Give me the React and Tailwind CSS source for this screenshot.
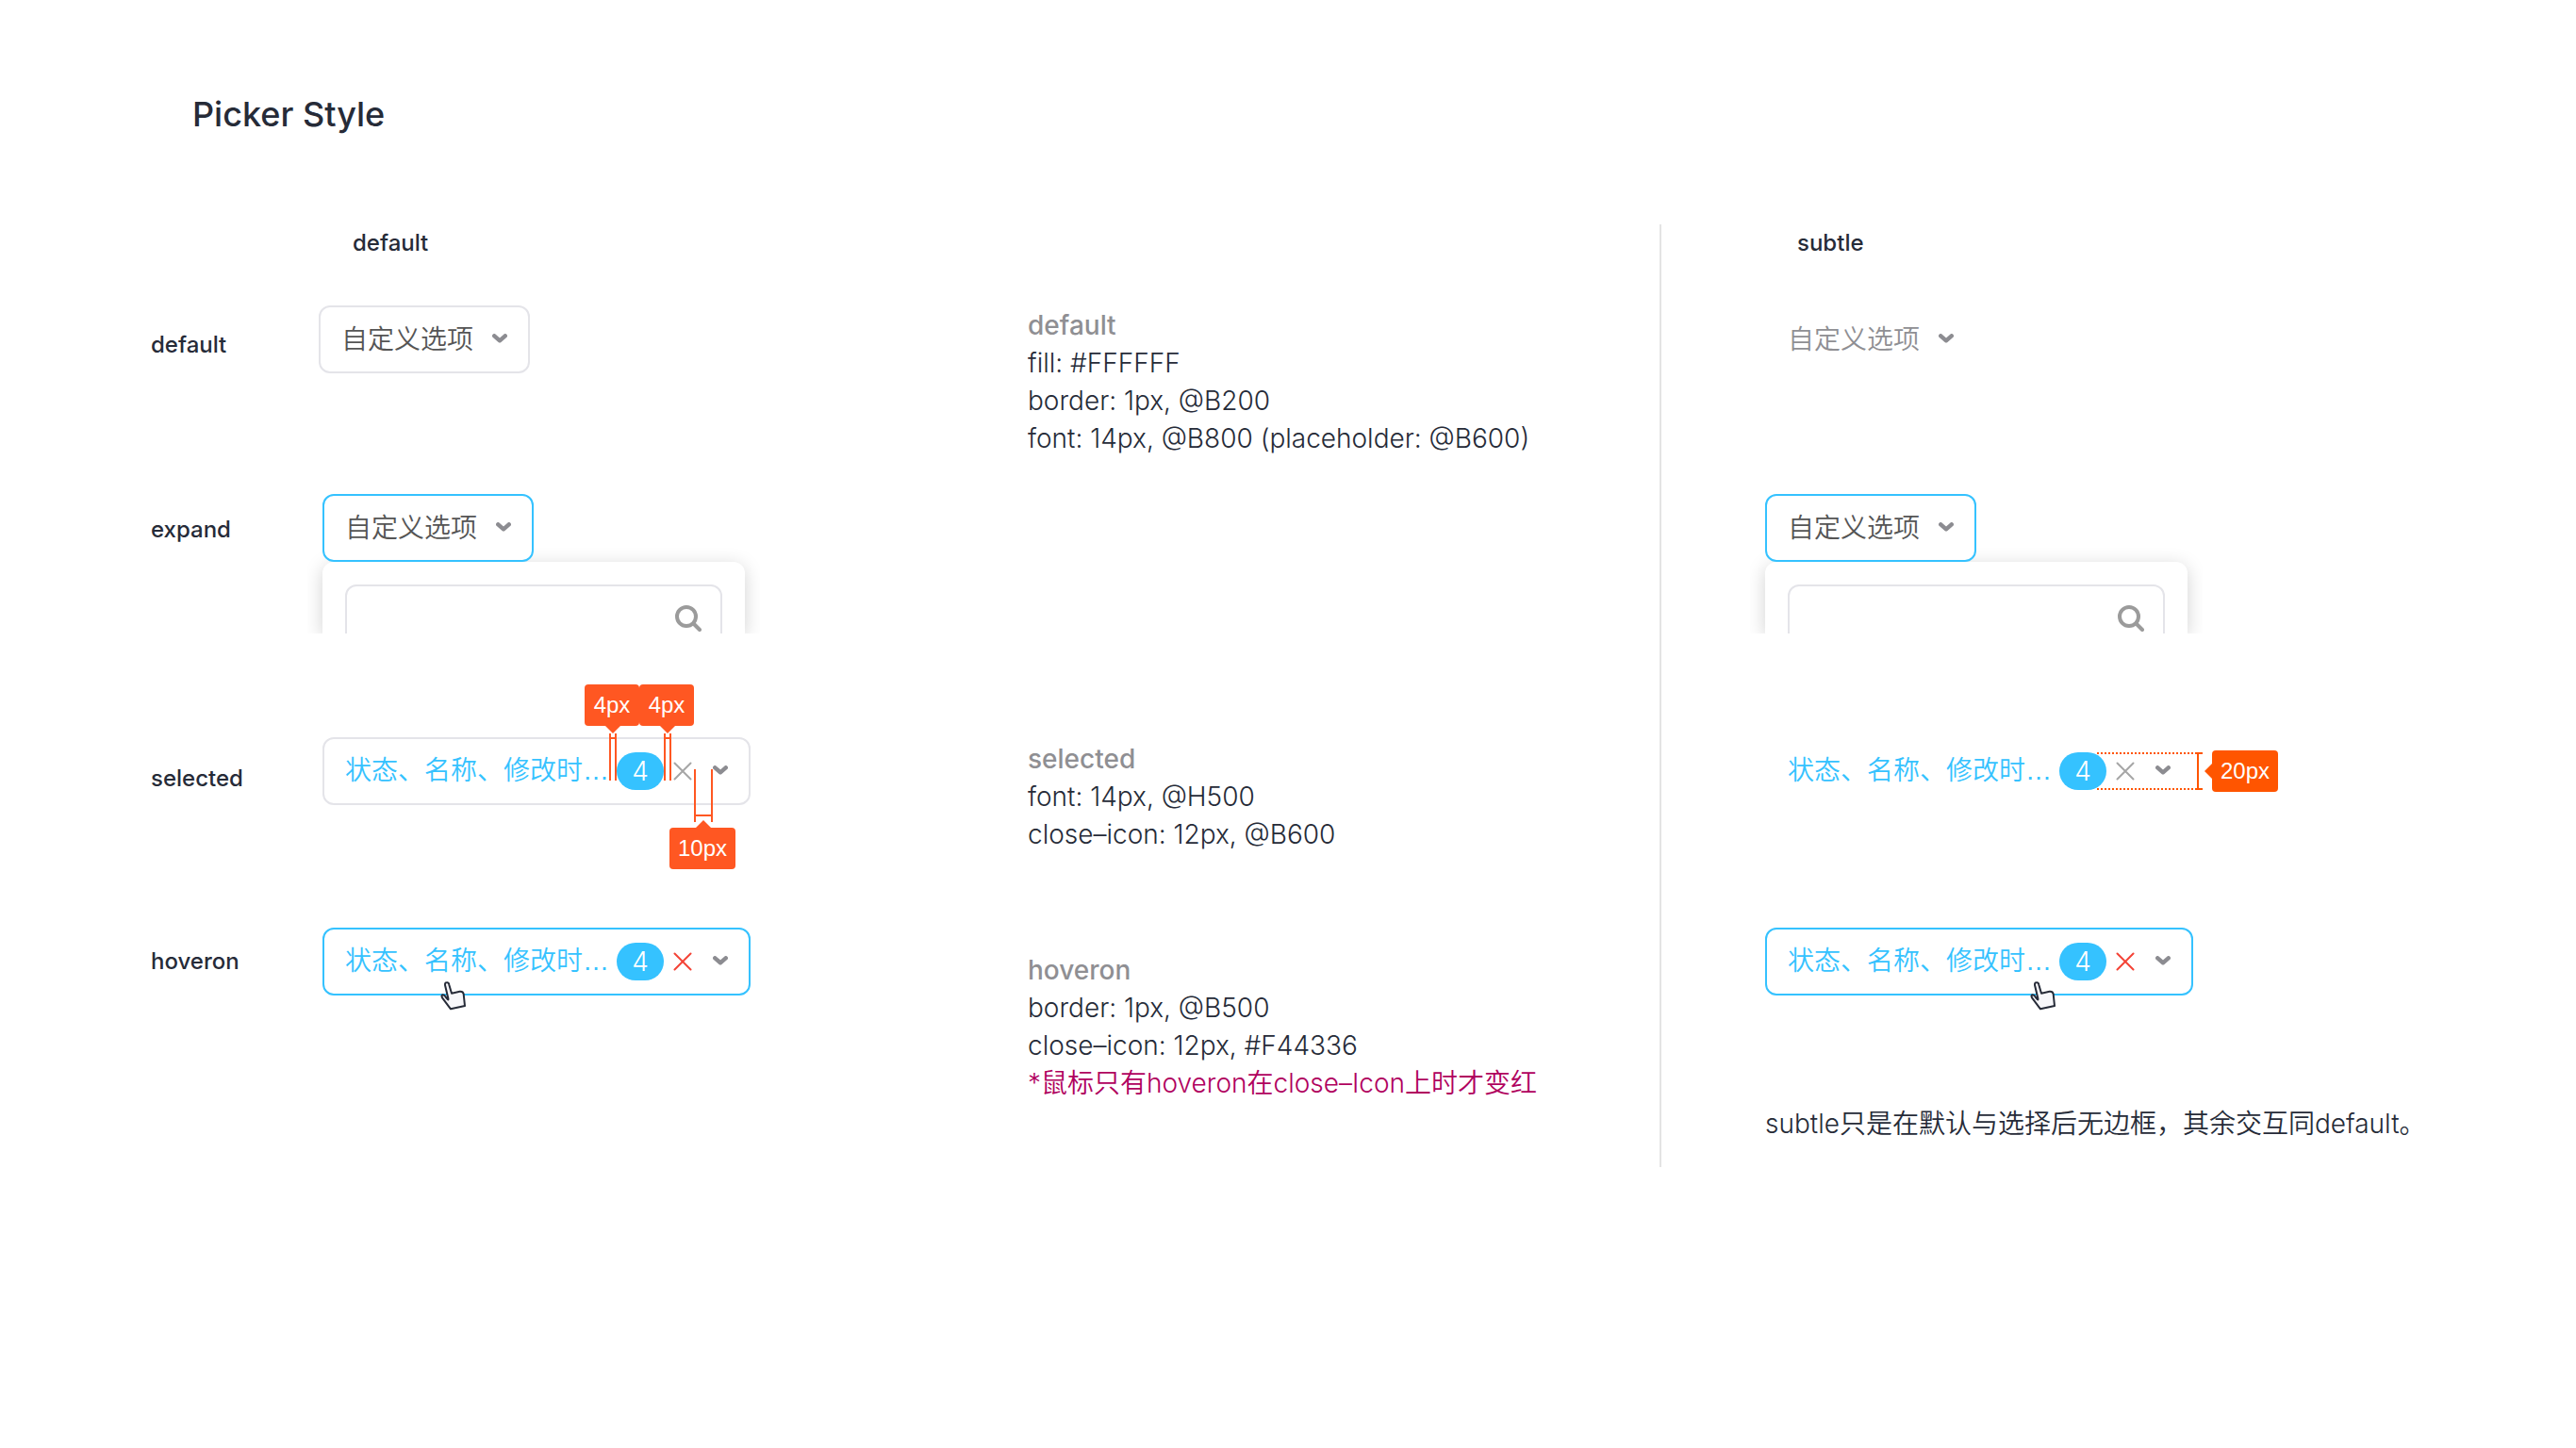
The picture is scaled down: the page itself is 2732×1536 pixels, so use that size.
function Chevron() {
  return (
    <svg className="h-3 w-4 shrink-0" viewBox="0 0 16 12" fill="none" aria-hidden="true">
      <path d="M2.3 2.3 8 7.3l5.7-5" stroke="#8c8c91" strokeWidth="4.4" strokeLinecap="round" strokeLinejoin="round" />
    </svg>
  );
}

function SearchIcon() {
  return (
    <svg className="size-7" viewBox="0 0 28 28" fill="none" aria-hidden="true">
      <circle cx="12" cy="12" r="10" stroke="#9b9b9b" strokeWidth="4" />
      <path d="M19.5 19.5 26 26" stroke="#9b9b9b" strokeWidth="4" strokeLinecap="round" />
    </svg>
  );
}

function HandCursor() {
  return (
    <svg className="h-8 w-7" viewBox="0 0 84 96" aria-hidden="true">
      <path
        d="M15 12Q14 4 20 4Q27 3 28 11L36 38L62 32Q72 31 74 40L78 78L33 88L6 52Q2 44 8 43Q13 43 18 51L24 58Q26 60 25 54Z"
        fill="#f7f7fa"
        stroke="#262b38"
        strokeWidth="6"
        strokeLinejoin="round"
      />
    </svg>
  );
}

function SimplePicker({ box = "border-transparent", text = "text-[#555555]", expanded = false }) {
  return (
    <button
      type="button"
      aria-haspopup="listbox"
      aria-expanded={expanded}
      className={`relative z-10 flex h-[72px] w-fit items-center gap-5 rounded-xl border-2 bg-white px-[22px] ${box}`}
    >
      <span className={`text-[28px] leading-10 font-[350] ${text}`}>自定义选项</span>
      <Chevron />
    </button>
  );
}

function ExpandedPicker({ name }) {
  return (
    <div>
      <SimplePicker box="border-[#35c2ff]" expanded />
      <div className="h-[76px] w-[448px] rounded-t-xl bg-white px-6 pt-6 shadow-[0_4px_20px_rgba(0,0,0,0.18)] [clip-path:inset(-20px_-16px_0_-16px)]">
        <div className="relative">
          <input
            type="text"
            aria-label={name}
            className="h-[72px] w-full rounded-xl border-2 border-[#e4e4e9] bg-white pr-16 pl-6 text-[28px] outline-none"
          />
          <span className="absolute top-[22px] right-[22px]">
            <SearchIcon />
          </span>
        </div>
      </div>
    </div>
  );
}

function SelectedPicker({ box = "border-transparent", cross = "text-[#a6a6a6]", children }) {
  return (
    <div className="relative w-fit">
      <div className={`flex h-[72px] w-[454px] items-center rounded-xl border-2 bg-white px-[22px] ${box}`}>
        <button type="button" className="flex flex-1 items-center justify-between text-[28px] leading-10">
          <span className="font-['Liberation_Sans','Noto_Sans_CJK_SC',sans-serif] font-[350] whitespace-nowrap text-[#35c2ff]">
            状态、名称、修改时…
          </span>
          <span className="flex h-10 w-[50px] items-center justify-center rounded-full bg-[#35c2ff] font-light text-white">4</span>
        </button>
        <button type="button" aria-label="clear" className={`ml-2 ${cross}`}>
          <svg className="size-6" viewBox="0 0 24 24" fill="none" aria-hidden="true">
            <path d="M3.5 3.5l17 17M20.5 3.5l-17 17" stroke="currentColor" strokeWidth="2" strokeLinecap="round" />
          </svg>
        </button>
        <button type="button" aria-label="open" className="ml-5">
          <Chevron />
        </button>
      </div>
      {children}
    </div>
  );
}

function Tag({ className, children }) {
  return (
    <span
      className={`absolute flex h-11 items-center justify-center rounded font-['Liberation_Sans',sans-serif] text-2xl text-white ${className}`}
    >
      {children}
    </span>
  );
}

function GapGuides() {
  return (
    <>
      <svg className="absolute -top-3 left-[300px] h-[108px] w-[116px]" viewBox="0 0 116 108" fill="#ff5722" aria-hidden="true">
        <path d="M0 0H16L8 8Z M4 8h2v50h-2z M10 8h2v50h-2z M4 12h8v2h-8z" />
        <path d="M58 0H74L66 8Z M62 8h2v50h-2z M68 8h2v50h-2z M62 12h8v2h-8z" />
        <path d="M94 46h2v56h-2z M112 46h2v56h-2z M94 94h20v2h-20z M96 108L104 100L112 108Z" />
      </svg>
      <Tag className="-top-14 left-[278px] w-[58px] bg-[#ff5722]">4px</Tag>
      <Tag className="-top-14 left-[336px] w-[58px] bg-[#ff5722]">4px</Tag>
      <Tag className="top-24 left-[368px] w-[70px] bg-[#ff5722]">10px</Tag>
    </>
  );
}

function HeightGuide() {
  return (
    <>
      <svg className="absolute top-3.5 left-[352px] h-11 w-[122px]" viewBox="0 0 122 44" fill="#ff5500" aria-hidden="true">
        <path d="M0 3H104M0 41H104" stroke="#ff5500" strokeWidth="2" strokeDasharray="2 2" />
        <path d="M104 2h8v2h-8z M104 40h8v2h-8z M106 2h2v40h-2z M122 14L114 22L122 30Z" />
      </svg>
      <Tag className="top-3.5 left-[474px] w-[70px] bg-[#ff5500]">20px</Tag>
    </>
  );
}

function Note({ title, lines, warning }) {
  return (
    <section>
      <h3 className="font-medium text-[#8f8f93]">{title}</h3>
      {lines.map((line) => (
        <p key={line}>{line}</p>
      ))}
      {warning && <p className="text-[#b0005e]">{warning}</p>}
    </section>
  );
}

export default function App() {
  return (
    <main className="pt-[101px] font-['Inter','Noto_Sans_CJK_SC',sans-serif] text-[#262b38]">
      <h1 className="pl-[204px] text-4xl leading-10 font-medium">Picker Style</h1>

      <div className="mt-[97px] grid grid-cols-[1760fr_972fr]">
        <div className="grid grid-cols-[178px_752fr_670fr] pl-40">
          <div className="flex flex-col pt-28 text-2xl font-medium">
            <span>default</span>
            <span className="mt-[164px]">expand</span>
            <span className="mt-[232px]">selected</span>
            <span className="mt-[162px]">hoveron</span>
          </div>

          <div>
            <h2 className="pt-1 pl-9 text-2xl font-medium">default</h2>
            <div className="mt-[50px]">
              <SimplePicker box="border-[#e4e4e9]" />
            </div>
            <div className="mt-32 pl-1">
              <ExpandedPicker name="search default" />
              <div className="mt-[110px]">
                <SelectedPicker box="border-[#e4e4e9]">
                  <GapGuides />
                </SelectedPicker>
              </div>
              <div className="mt-[130px]">
                <SelectedPicker box="border-[#35c2ff]" cross="text-[#f44336]">
                  <span className="absolute top-[57px] left-[125px]">
                    <HandCursor />
                  </span>
                </SelectedPicker>
              </div>
            </div>
          </div>

          <div className="pt-[87px] text-[28px] leading-10 font-[350] whitespace-nowrap">
            <Note title="default" lines={["fill: #FFFFFF", "border: 1px, @B200", "font: 14px, @B800 (placeholder: @B600)"]} />
            <div className="mt-[300px]">
              <Note title="selected" lines={["font: 14px, @H500", "close–icon: 12px, @B600"]} />
            </div>
            <div className="mt-[104px]">
              <Note
                title="hoveron"
                lines={["border: 1px, @B500", "close–icon: 12px, #F44336"]}
                warning="*鼠标只有hoveron在close–Icon上时才变红"
              />
            </div>
          </div>
        </div>

        <div className="border-l-2 border-[#e4e4e4] pb-[26px] pl-[110px]">
          <h2 className="pt-1 pl-[34px] text-2xl font-medium">subtle</h2>
          <div className="mt-[50px]">
            <SimplePicker text="text-[#8f8f93]" />
          </div>
          <div className="mt-32">
            <ExpandedPicker name="search subtle" />
          </div>
          <div className="mt-[110px]">
            <SelectedPicker>
              <HeightGuide />
            </SelectedPicker>
          </div>
          <div className="mt-[130px]">
            <SelectedPicker box="border-[#35c2ff]" cross="text-[#f44336]">
              <span className="absolute top-[57px] left-[281px]">
                <HandCursor />
              </span>
            </SelectedPicker>
          </div>
          <p className="mt-[116px] text-[28px] leading-10 font-[350] whitespace-nowrap">
            subtle只是在默认与选择后无边框，其余交互同default。
          </p>
        </div>
      </div>
    </main>
  );
}
